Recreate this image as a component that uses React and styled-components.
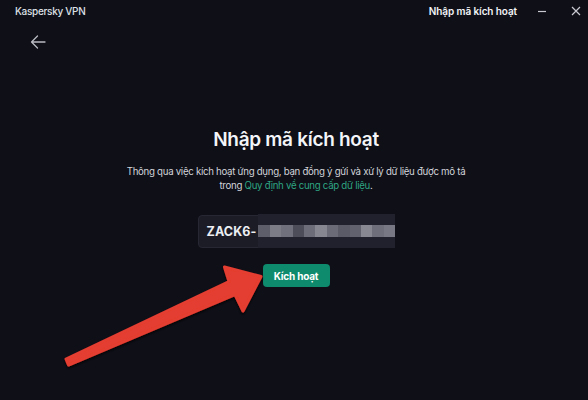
import React from "react";
import styled, { createGlobalStyle } from "styled-components";

const Global = createGlobalStyle`
  html, body { margin: 0; padding: 0; background: #0e0f17; }
  * { box-sizing: border-box; }
`;

const Window = styled.div`
  position: relative;
  width: 588px;
  height: 400px;
  background: #0e0f17;
  color: #e6e7ec;
  font-family: Inter, "Noto Sans", sans-serif;
  display: flex;
  flex-direction: column;
  overflow: hidden;
`;

const TitleBar = styled.div`
  height: 21px;
  display: flex;
  align-items: center;
  justify-content: space-between;
  padding: 0 4px 0 15px;
`;

const AppName = styled.span`
  font-size: 10px;
  font-weight: 500;
  letter-spacing: -0.3px;
  color: #dfe0e6;
`;

const TitleRight = styled.div`
  display: flex;
  align-items: center;
`;

const PageName = styled.span`
  font-size: 10px;
  font-weight: 600;
  letter-spacing: -0.1px;
  color: #f2f3f6;
  margin-right: 16px;
`;

const WinBtn = styled.button`
  width: 17px;
  height: 17px;
  padding: 0;
  margin-left: ${(p) => p.$gap || 0}px;
  border: none;
  background: transparent;
  display: flex;
  align-items: center;
  justify-content: center;
  color: #c9cad1;
`;

const BackRow = styled.div`
  height: 42px;
  display: flex;
  align-items: center;
  padding: 0 0 0 30px;
`;

const BackBtn = styled.button`
  border: none;
  background: transparent;
  padding: 0;
  display: flex;
  color: #b9bac2;
`;

const Content = styled.main`
  display: flex;
  flex-direction: column;
  align-items: center;
  padding: 65px 0 0 4px;
`;

const Heading = styled.h1`
  margin: 0;
  font-size: 19px;
  line-height: 24px;
  font-weight: 600;
  letter-spacing: -0.3px;
  color: #f4f5f8;
`;

const Lead = styled.p`
  margin: 13px 0 0;
  width: 350px;
  text-align: center;
  font-size: 9.7px;
  line-height: 14px;
  letter-spacing: -0.3px;
  color: #d3d4da;
`;

const Link = styled.a`
  color: #2fa583;
  text-decoration: none;
`;

const Field = styled.div`
  margin-top: 22px;
  width: 197px;
  height: 33px;
  display: flex;
  align-items: center;
  background: #1b1c26;
  border: 1px solid #262732;
  border-radius: 4px;
`;

const CodeText = styled.span`
  padding-left: 8px;
  font-size: 12.5px;
  font-weight: 700;
  letter-spacing: 0.1px;
  color: #eceef2;
`;

const Mask = styled.div`
  margin-left: 2px;
  align-self: stretch;
  margin-top: -2px;
  margin-bottom: -1px;
  flex: 1;
  background: #20212c;
  display: flex;
  align-items: center;
`;

const Cell = styled.div`
  width: 11.4px;
  height: 12px;
  background: ${(p) => p.$shade};
`;

const ActivateButton = styled.button`
  margin-top: 16px;
  width: 67px;
  height: 23px;
  border: none;
  border-radius: 4px;
  background: #0e8a6c;
  color: #ffffff;
  font-family: inherit;
  font-size: 10px;
  font-weight: 700;
  letter-spacing: -0.2px;
  padding: 0;
`;

const Annotation = styled.svg`
  position: absolute;
  left: 0;
  top: 0;
  pointer-events: none;
`;

const shades = [
  "#5d5e69", "#7b7c86", "#6f707b", "#4c4d59", "#6c6d79", "#868791",
  "#6a6b77", "#5a5b66", "#61626d", "#878892", "#6e6f7a", "#777883",
];

export default function App() {
  return (
    <>
      <Global />
      <Window>
        <TitleBar>
          <AppName>Kaspersky VPN</AppName>
          <TitleRight>
            <PageName>Nhập mã kích hoạt</PageName>
            <WinBtn aria-label="minimize">
              <svg width="10" height="10" viewBox="0 0 10 10">
                <path d="M1 5.5h8" stroke="currentColor" strokeWidth="1.2" />
              </svg>
            </WinBtn>
            <WinBtn $gap={17} aria-label="close">
              <svg width="10" height="10" viewBox="0 0 10 10">
                <path d="M1 1l8 8M9 1l-8 8" stroke="currentColor" strokeWidth="1.2" />
              </svg>
            </WinBtn>
          </TitleRight>
        </TitleBar>
        <BackRow>
          <BackBtn aria-label="back">
            <svg width="16" height="14" viewBox="0 0 16 14" fill="none">
              <path d="M15 7H1.5M7.5 1L1.5 7l6 6" stroke="currentColor" strokeWidth="1.3" strokeLinecap="round" strokeLinejoin="round" />
            </svg>
          </BackBtn>
        </BackRow>
        <Content>
          <Heading>Nhập mã kích hoạt</Heading>
          <Lead>
            Thông qua việc kích hoạt ứng dụng, bạn đồng ý gửi và xử lý dữ liệu được mô tả trong{" "}
            <Link href="#">Quy định về cung cấp dữ liệu</Link>.
          </Lead>
          <Field>
            <CodeText>ZACK6-</CodeText>
            <Mask>
              {shades.map((s, i) => (
                <Cell key={i} $shade={s} />
              ))}
            </Mask>
          </Field>
          <ActivateButton>Kích hoạt</ActivateButton>
        </Content>
        <Annotation width="588" height="400" viewBox="0 0 588 400">
          <defs>
            <filter id="sh" x="-10%" y="-10%" width="120%" height="130%">
              <feDropShadow dx="0" dy="1.5" stdDeviation="1.2" floodColor="#000" floodOpacity="0.8" />
            </filter>
          </defs>
          <path
            d="M66 359 L229 281.5 L224.5 267 L261 276.5 L243 311 L235 294.5 L68.5 365 Z"
            fill="#e43d30"
            stroke="#e43d30"
            strokeWidth="3"
            strokeLinejoin="round"
            filter="url(#sh)"
          />
        </Annotation>
      </Window>
    </>
  );
}
